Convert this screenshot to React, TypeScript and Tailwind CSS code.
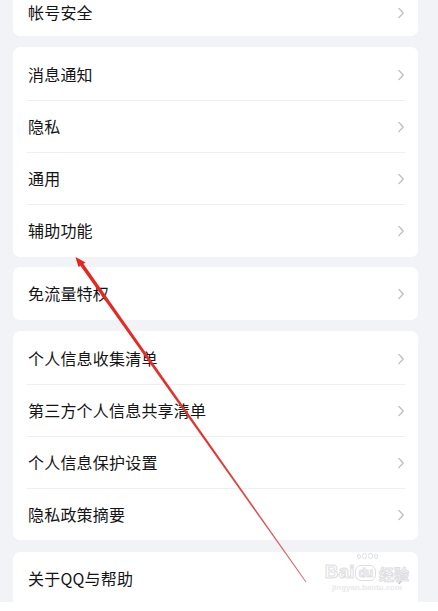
import React from 'react';

const font = { fontFamily: '"Noto Sans CJK SC", "Noto Sans", sans-serif' };

function Chevron() {
    return (
        <svg width="8" height="12" viewBox="0 0 8 12" className="shrink-0">
            <path d="M2 1.5 L6.2 6 L2 10.5" fill="none" stroke="#c2c3c6" strokeWidth="1.5" strokeLinecap="round" strokeLinejoin="round" />
        </svg>
    );
}

function Row({ label, last, className = 'h-[51px]' }: { label: string; last?: boolean; className?: string }) {
    return (
        <div>
            <div className={`flex items-center justify-between pl-[15px] pr-[13px] ${className}`}>
                <span className="-mt-[2px] text-[16px] leading-[18px] text-[#141416] tracking-[0.2px]">{label}</span>
                <Chevron />
            </div>
            {!last && <div className="ml-[14px] mr-[13px] h-px bg-[#efeff1]" />}
        </div>
    );
}

function Card({ children, className = '' }: { children: React.ReactNode; className?: string }) {
    return <div className={`w-[405px] rounded-[7px] bg-white ${className}`}>{children}</div>;
}

// red annotation arrow drawn over the list
function Arrow() {
    return (
        <svg className="pointer-events-none absolute left-0 top-0" width="438" height="611" viewBox="0 0 438 611">
            <defs>
                <linearGradient id="ar" x1="77" y1="258" x2="306" y2="582" gradientUnits="userSpaceOnUse">
                    <stop offset="0" stopColor="#e2261f" />
                    <stop offset="0.6" stopColor="#dc3a34" />
                    <stop offset="1" stopColor="#d07474" />
                </linearGradient>
            </defs>
            <polygon points="80.2,265.5 83.2,263.5 306.4,581.7 305.6,582.3" fill="url(#ar)" />
            <polygon points="75.5,257 85.5,262.5 78.5,267" fill="#e2261f" />
        </svg>
    );
}

function Watermark() {
    const outline = { color: '#fdfdfd', WebkitTextStroke: '1px #dedfe2' } as React.CSSProperties;
    return (
        <div className="pointer-events-none absolute left-[322px] top-[562px] flex w-[90px] flex-col items-center" style={{ fontFamily: '"Liberation Sans", Arial, sans-serif' }}>
            <div className="flex items-end gap-[1px]">
                <span className="text-[19px] font-bold leading-none" style={outline}>Bai</span>
                <span className="relative rounded-[6px] border border-[#dedfe2] px-[2px] text-[12px] font-bold leading-[14px]" style={outline}>
                    du
                    <span className="absolute -top-[13px] left-[1px] flex items-end gap-[1px]">
                        <span className="h-[5px] w-[4px] rounded-full border border-[#dedfe2]" />
                        <span className="h-[6px] w-[5px] rounded-full border border-[#dedfe2]" />
                        <span className="h-[6px] w-[5px] rounded-full border border-[#dedfe2]" />
                        <span className="h-[5px] w-[4px] rounded-full border border-[#dedfe2]" />
                    </span>
                </span>
                <span className="ml-[2px] text-[15px] font-bold leading-none" style={{ ...font, ...outline }}>经验</span>
            </div>
            <span className="mt-[3px] text-[8px] font-bold leading-none text-[#e8e9eb]">jingyan.baidu.com</span>
        </div>
    );
}

export default function App() {
    return (
        <div className="relative h-[611px] w-[438px] overflow-hidden bg-[#f2f3f6]" style={font}>
            <div className="flex flex-col pl-[13px]">
                {/* first card is scrolled partly out of view */}
                <Card className="h-[36px] rounded-t-none pt-[2px]">
                    <Row label="帐号安全" last className="h-[22px]" />
                </Card>
                <Card className="mt-[11px] pt-[2px] pb-[1px]">
                    <Row label="消息通知" />
                    <Row label="隐私" />
                    <Row label="通用" />
                    <Row label="辅助功能" last />
                </Card>
                <Card className="mt-[10px]">
                    <Row label="免流量特权" last className="h-[53px]" />
                </Card>
                <Card className="mt-[11px] pt-[2px]">
                    <Row label="个人信息收集清单" />
                    <Row label="第三方个人信息共享清单" />
                    <Row label="个人信息保护设置" />
                    <Row label="隐私政策摘要" last />
                </Card>
                <Card className="mt-[12px] rounded-b-none">
                    <Row label="关于QQ与帮助" last className="h-[50px] pt-[4px]" />
                </Card>
            </div>
            <div className="absolute bottom-0 left-0 h-[9px] w-full bg-white" />
            <Watermark />
            <Arrow />
        </div>
    );
}
